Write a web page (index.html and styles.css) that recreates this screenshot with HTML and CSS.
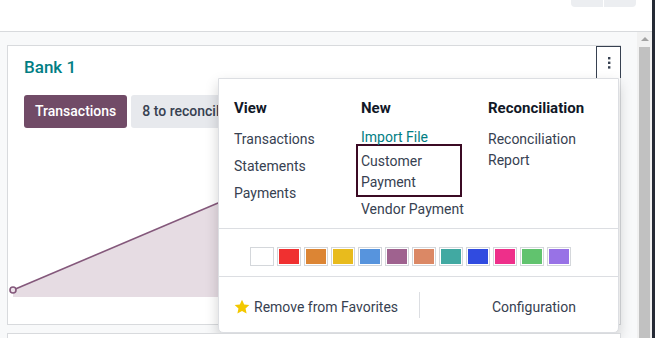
FILE: index.html
```html
<!DOCTYPE html>
<html lang="en">
<head>
    <meta charset="UTF-8">
    <title>Accounting Dashboard</title>
    <link rel="stylesheet" href="styles.css">
</head>
<body>

<div class="screen">
    <div class="app">
        <!--顶部控制栏-->
        <div class="control-bar">
            <div class="pager">
                <span class="pager-btn"></span>
                <span class="pager-btn"></span>
            </div>
        </div>

        <div class="content">
            <div class="kanban">
                <!--日记账卡片-->
                <div class="journal-card">
                    <div class="journal-head">
                        <a class="journal-title" href="">Bank 1</a>
                        <span class="journal-toggle">
                            <svg width="4" height="12" viewBox="0 0 4 12">
                                <rect x="1" y="0" width="2.4" height="2.4" fill="#374151"/>
                                <rect x="1" y="4.6" width="2.4" height="2.4" fill="#374151"/>
                                <rect x="1" y="9.2" width="2.4" height="2.4" fill="#374151"/>
                            </svg>
                        </span>
                    </div>
                    <div class="journal-actions">
                        <a class="btn btn-primary" href="">Transactions</a>
                        <a class="btn btn-secondary" href="">8 to reconcile</a>
                    </div>
                    <svg class="journal-graph" width="612" height="168" viewBox="0 0 612 168">
                        <polygon points="5,154 420,-22 420,161 5,161" fill="#e6dce3"/>
                        <polyline points="5,154 420,-22" fill="none" stroke="#84587b" stroke-width="1.6"/>
                        <circle cx="5" cy="154" r="3" fill="#ece3ea" stroke="#84587b" stroke-width="1.6"/>
                    </svg>

                    <!--下拉菜单-->
                    <div class="dropdown-menu">
                        <div class="menu-columns">
                            <div class="menu-col">
                                <h5>View</h5>
                                <a class="menu-item" href="">Transactions</a>
                                <a class="menu-item" href="">Statements</a>
                                <a class="menu-item" href="">Payments</a>
                            </div>
                            <div class="menu-col menu-col-new">
                                <h5>New</h5>
                                <a class="menu-item menu-item-link" href="">Import File</a>
                                <a class="menu-item menu-item-focus" href="">Customer Payment</a>
                                <a class="menu-item menu-item-after" href="">Vendor Payment</a>
                            </div>
                            <div class="menu-col">
                                <h5>Reconciliation</h5>
                                <a class="menu-item" href="">Reconciliation Report</a>
                            </div>
                        </div>

                        <div class="menu-colors">
                            <span class="swatch" style="background-color: #ffffff"></span>
                            <span class="swatch" style="background-color: #f03030"></span>
                            <span class="swatch" style="background-color: #dc8534"></span>
                            <span class="swatch" style="background-color: #e8bb1d"></span>
                            <span class="swatch" style="background-color: #5794dd"></span>
                            <span class="swatch" style="background-color: #9f628f"></span>
                            <span class="swatch" style="background-color: #db8865"></span>
                            <span class="swatch" style="background-color: #41a9a2"></span>
                            <span class="swatch" style="background-color: #304be0"></span>
                            <span class="swatch" style="background-color: #ee2f8a"></span>
                            <span class="swatch" style="background-color: #61c36e"></span>
                            <span class="swatch" style="background-color: #9872e6"></span>
                        </div>

                        <div class="menu-footer">
                            <a class="menu-fav" href="">
                                <svg width="16" height="16" viewBox="0 0 24 24">
                                    <path d="M12 1l3.3 7.1 7.7.8-5.7 5.3 1.6 7.7L12 18l-6.9 3.9 1.6-7.7L1 8.9l7.7-.8z" fill="#f3c800"/>
                                </svg>
                                Remove from Favorites
                            </a>
                            <a class="menu-config" href="">Configuration</a>
                        </div>
                    </div>
                </div>

                <div class="journal-card journal-card-next"></div>
            </div>

            <!--滚动条-->
            <div class="scrollbar">
                <span class="scrollbar-arrow"></span>
                <span class="scrollbar-thumb"></span>
            </div>
        </div>
    </div>
    <div class="edge"></div>
</div>

</body>
</html>
```

FILE: styles.css
```css
* {
    margin: 0;
    padding: 0;
    box-sizing: border-box;
}

body {
    width: 655px;
    height: 338px;
    overflow: hidden;
    font-family: Roboto, "Noto Sans", sans-serif;
    font-size: 14px;
    color: #374151;
    background-color: #ffffff;
}

a {
    text-decoration: none;
    color: inherit;
}

.screen {
    display: flex;
    height: 338px;
}

.app {
    width: 652px;
    display: flex;
    flex-direction: column;
}

/*右边的深色边*/
.edge {
    width: 3px;
    background-color: #252a35;
}

/*顶部控制栏*/
.control-bar {
    height: 32px;
    flex-shrink: 0;
    border-bottom: 1px solid #d8dadd;
    background-color: #ffffff;
    display: flex;
    justify-content: flex-end;
    padding-right: 16px;
}

.pager {
    display: flex;
    gap: 1px;
}

.pager-btn {
    width: 32px;
    height: 7px;
    background-color: #eceef1;
}

.pager-btn:first-child {
    border-bottom-left-radius: 4px;
}

.pager-btn:last-child {
    border-bottom-right-radius: 4px;
}

.content {
    flex: 1;
    display: flex;
    overflow: hidden;
    background-color: #f8f9fa;
}

.kanban {
    width: 637px;
    padding: 13px 0 0 7px;
}

/*卡片*/
.journal-card {
    position: relative;
    width: 614px;
    height: 280px;
    background-color: #ffffff;
    border: 1px solid #d8dadd;
}

.journal-card-next {
    margin-top: 8px;
}

.journal-head {
    display: flex;
    justify-content: space-between;
    align-items: flex-start;
}

.journal-title {
    padding: 9px 0 0 16px;
    line-height: 24px;
    font-size: 17px;
    font-weight: 500;
    color: #017e84;
}

.journal-toggle {
    width: 25px;
    height: 32px;
    margin-right: -1px;
    border: 1px solid #374151;
    border-bottom: none;
    display: flex;
    justify-content: center;
    align-items: center;
    padding-left: 1px;
}

.journal-actions {
    display: flex;
    gap: 4px;
    margin-top: 16px;
    padding-left: 16px;
}

.btn {
    height: 33px;
    line-height: 33px;
    padding: 0 11px;
    border-radius: 3px;
    font-weight: 500;
    white-space: nowrap;
}

.btn-primary {
    background-color: #714b67;
    color: #ffffff;
}

.btn-secondary {
    background-color: #e7e9ed;
    color: #374151;
}

.journal-graph {
    display: block;
    margin-top: 8px;
}

/*下拉菜单*/
.dropdown-menu {
    position: absolute;
    left: 210px;
    top: 32px;
    width: 401px;
    height: 255px;
    background-color: #ffffff;
    border: 1px solid #dcdee2;
    border-radius: 0 0 5px 5px;
    box-shadow: 0 6px 14px rgba(0, 0, 0, .18);
}

.menu-columns {
    display: grid;
    grid-template-columns: 127px 127px 1fr;
    padding: 19px 15px 5px;
}

.menu-col h5 {
    font-size: 15px;
    font-weight: 700;
    line-height: 20px;
    color: #111827;
    margin-bottom: 8px;
}

.menu-item {
    display: block;
    line-height: 21px;
    padding: 3px 0;
}

.menu-col-new .menu-item-link {
    margin-top: -2px;
    color: #017e84;
}

.menu-item-focus {
    width: 106px;
    margin: -7px 0 0 -5px;
    padding: 5px 3px 2px;
    border: 2px solid #3b0a24;
}

.menu-item-after {
    margin-top: -1px;
}

.menu-colors {
    display: flex;
    gap: 3px;
    border-top: 1px solid #dcdee2;
    padding: 18px 0 10px 31px;
}

.swatch {
    width: 24px;
    height: 19px;
    border: 1px solid #d4d7db;
    box-shadow: inset 0 0 0 1px #ffffff;
}

.menu-footer {
    display: flex;
    align-items: center;
    border-top: 1px solid #dcdee2;
    padding: 15px 0 14px;
}

.menu-fav {
    width: 201px;
    line-height: 22px;
    padding: 4px 0 0 15px;
    display: flex;
    align-items: center;
    gap: 4px;
    border-right: 1px solid #dcdee2;
}

.menu-config {
    flex: 1;
    line-height: 22px;
    padding: 4px 0 0 72px;
}

/*滚动条*/
.scrollbar {
    width: 15px;
    position: relative;
    background-color: #f1f1f1;
    padding-top: 15px;
}

.scrollbar-arrow {
    position: absolute;
    left: 4px;
    top: 5px;
    border-left: 4px solid transparent;
    border-right: 4px solid transparent;
    border-bottom: 4px solid #a3a3a3;
}

.scrollbar-thumb {
    display: block;
    margin-left: 2px;
    width: 11px;
    height: 300px;
    background-color: #c1c1c1;
}
```
